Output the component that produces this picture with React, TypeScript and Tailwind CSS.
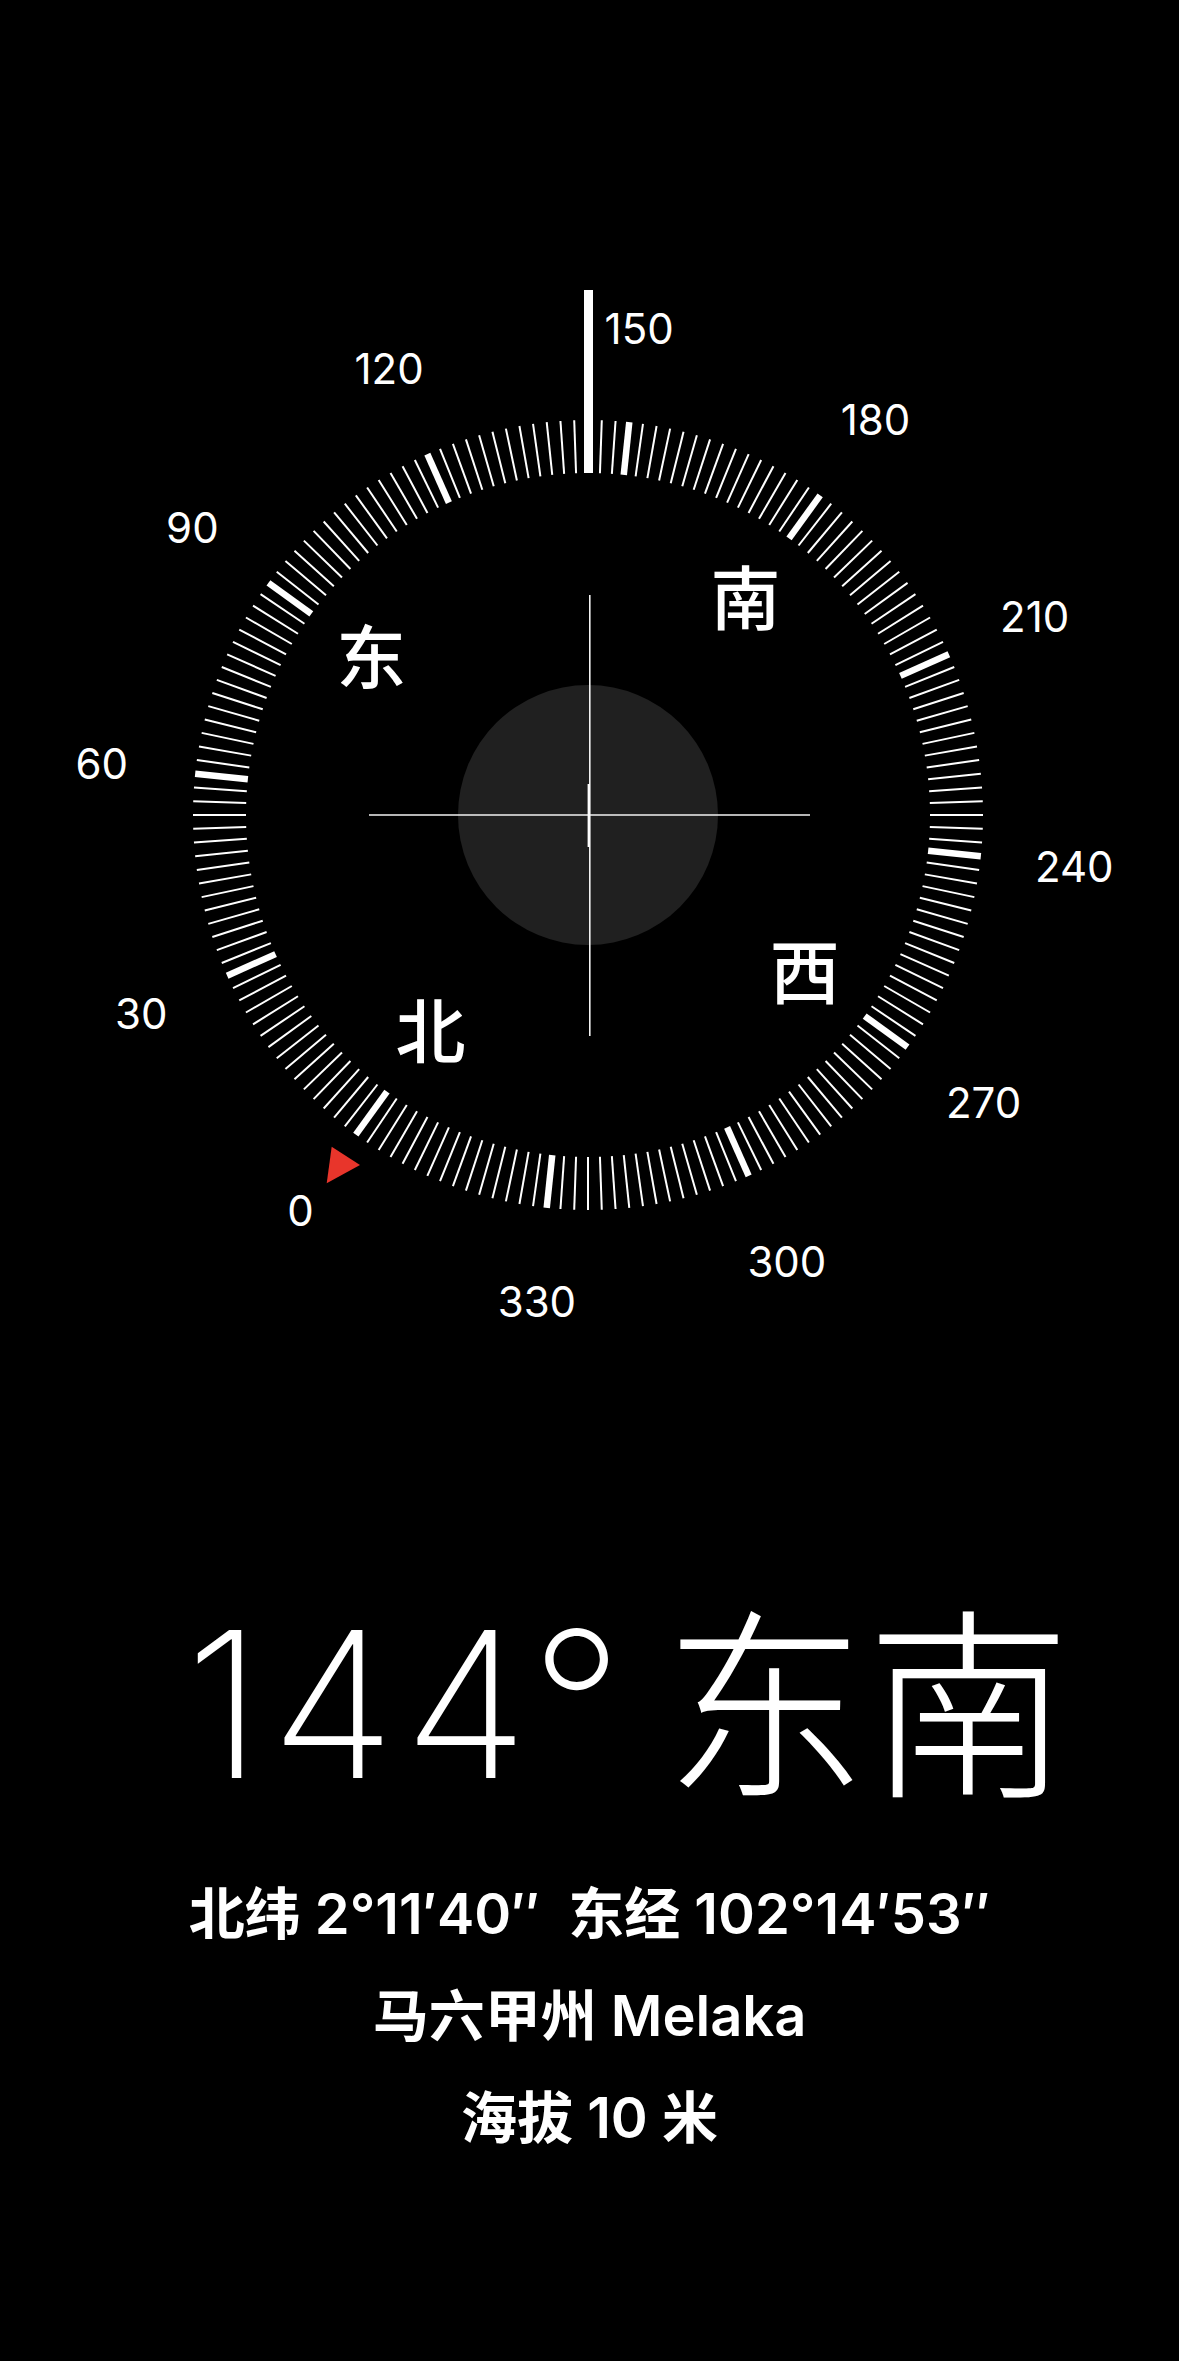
import React from 'react';

const CX = 588;
const CY = 815;
const HEADING = 144;

const rad = (d: number) => (d * Math.PI) / 180;

const polar = (deg: number, r: number) => {
  const a = rad(deg - HEADING);
  return { x: CX + r * Math.sin(a), y: CY - r * Math.cos(a) };
};

const ticks = Array.from({ length: 180 }, (_, i) => i * 2);
const labels = Array.from({ length: 12 }, (_, i) => i * 30);
const cardinals = [
  { deg: 0, ch: '北' },
  { deg: 90, ch: '东' },
  { deg: 180, ch: '南' },
  { deg: 270, ch: '西' },
];

const Dial: React.FC = () => {
  return (
    <svg width={1179} height={1400} viewBox="0 0 1179 1400" className="block shrink-0">
      {/* tick ring, one line every 2° */}
      {ticks.map((d) => {
        const major = d % 30 === 0;
        return (
          <line
            key={d}
            x1={CX}
            y1={CY - 395}
            x2={CX}
            y2={CY - 342}
            stroke="#fff"
            strokeWidth={major ? 6.5 : 2}
            transform={`rotate(${d - HEADING} ${CX} ${CY})`}
          />
        );
      })}

      {/* heading index */}
      <rect x={CX - 4} y={290} width={9} height={183} fill="#fff" />

      {/* degree labels */}
      {labels.map((d) => {
        const p = polar(d, 489);
        return (
          <text
            key={d}
            x={p.x}
            y={p.y}
            fill="#fff"
            fontSize={42}
            textAnchor="middle"
            dominantBaseline="central"
            className="font-['Inter',sans-serif]"
          >
            {d}
          </text>
        );
      })}

      {/* cardinal points */}
      {cardinals.map((c) => {
        const p = polar(c.deg, 268);
        return (
          <text
            key={c.ch}
            x={p.x}
            y={p.y - 4}
            fill="#fff"
            fontSize={70}
            fontWeight={500}
            textAnchor="middle"
            dominantBaseline="central"
            className="font-['Noto_Sans_CJK_SC',sans-serif]"
          >
            {c.ch}
          </text>
        );
      })}

      {/* north marker */}
      <polygon points="331.7,1146.7 360,1165 326.7,1183.3" fill="#e8352b" />

      {/* level bubble + crosshair */}
      <circle cx={CX} cy={CY} r={130} fill="#202020" />
      <line x1={369} y1={CY} x2={810} y2={CY} stroke="#f2f2f2" strokeWidth={1.6} />
      <line x1={589.8} y1={595} x2={589.8} y2={1036} stroke="#f2f2f2" strokeWidth={1.6} />
      <rect x={587.6} y={784} width={2.2} height={63} fill="#fff" />
    </svg>
  );
};

export default function App() {
  return (
    <div className="w-[1179px] h-[2361px] bg-black overflow-hidden flex flex-col items-center text-white font-['Inter','Noto_Sans_CJK_SC',sans-serif]">
      <Dial />

      {/* heading readout */}
      <div className="mt-[192px] h-[205px] w-full flex justify-center items-baseline pl-[76px] font-extralight leading-none whitespace-nowrap">
        <span className="text-[204px] tracking-[8px] -translate-y-[4px]">144°</span>
        <span className="text-[203px] ml-[33px] font-['Noto_Sans_CJK_SC',sans-serif]">东南</span>
      </div>

      {/* location info */}
      <div className="mt-[66px] flex flex-col items-center text-[56px] font-semibold leading-[102px] whitespace-nowrap">
        <div>北纬 2°11′40″&nbsp; 东经 102°14′53″</div>
        <div>马六甲州 Melaka</div>
        <div>海拔 10 米</div>
      </div>
    </div>
  );
}
